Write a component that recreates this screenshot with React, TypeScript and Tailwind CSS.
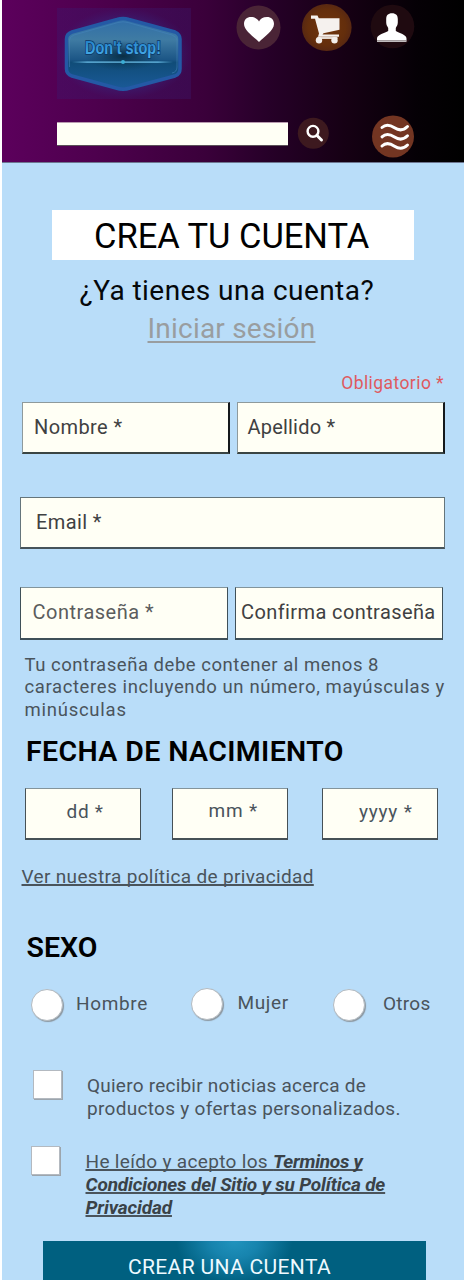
import type { ReactNode } from "react";

function Logo() {
  return (
    <svg className="mt-2 h-[91px] w-[134px] shrink-0" viewBox="57 8 134 91" role="img" aria-label="Don't stop!">
      <defs>
        <radialGradient id="glow">
          <stop offset="0.5" stopColor="#2d3c96" stopOpacity="0.75" />
          <stop offset="1" stopColor="#3a1a70" stopOpacity="0.35" />
        </radialGradient>
        <linearGradient id="badge" x1="0" y1="0" x2="0" y2="1">
          <stop offset="0" stopColor="#2f6da8" />
          <stop offset="0.3" stopColor="#3f7ba3" />
          <stop offset="0.58" stopColor="#1c5686" />
          <stop offset="0.62" stopColor="#104c78" />
          <stop offset="1" stopColor="#1a5a98" />
        </linearGradient>
        <radialGradient id="shade">
          <stop offset="0" stopColor="#06283c" stopOpacity="0.9" />
          <stop offset="1" stopColor="#0a3b58" stopOpacity="0" />
        </radialGradient>
        <linearGradient id="letters" x1="0" y1="0" x2="0" y2="1">
          <stop offset="0" stopColor="#1f7cc4" />
          <stop offset="1" stopColor="#4db4ee" />
        </linearGradient>
        <linearGradient id="rule">
          <stop offset="0" stopColor="#6fc4ee" stopOpacity="0" />
          <stop offset="0.15" stopColor="#6fc4ee" />
          <stop offset="0.85" stopColor="#6fc4ee" />
          <stop offset="1" stopColor="#6fc4ee" stopOpacity="0" />
        </linearGradient>
      </defs>
      <rect x="57" y="8" width="134" height="91" fill="url(#glow)" />
      <path d="M117 19.5Q123 17.5 129 19.5L175 32Q180 34 180 39V69Q180 74 175 76L130 88Q123 90.500 116 88L72 76Q66.500 74 66.500 69V39Q66.500 34 72 32Z" fill="url(#badge)" stroke="#2459a5" strokeWidth="3.500" />
      <path d="M118 22.500Q123 21 128 22.500L172 35Q177 37 177 40V67Q177 72 172 73" fill="none" stroke="#4583bb" strokeOpacity="0.7" strokeWidth="0.800" />
      <path d="M118 22.500L74 35Q69.500 37 69.500 40V67" fill="none" stroke="#4583bb" strokeOpacity="0.7" strokeWidth="0.800" />
      <ellipse cx="123" cy="56" rx="38" ry="15" fill="url(#shade)" />
      <rect x="72" y="61.500" width="101" height="1.200" fill="url(#rule)" />
      <circle cx="123" cy="62" r="2" fill="#3badd4" />
      <text x="85" y="54.300" textLength="76" lengthAdjust="spacingAndGlyphs" className="font-['Liberation_Sans'] text-[18px] font-bold" fill="url(#letters)" stroke="#0b3664" strokeWidth="1.600" paintOrder="stroke">
        Don't stop!
      </text>
    </svg>
  );
}

function HeartIcon() {
  return (
    <svg className="mt-[5px] ml-[45px] size-[45px] shrink-0" viewBox="236 5 45 45">
      <circle cx="258.500" cy="27.500" r="22" fill="#4a2436" />
      <path d="M259 42C254 37 244 30.500 244 24C244 19.500 247 17 251 17C255 17 258 19 259 21.500C260 19 263 17 267 17C271 17 274 19.500 274 24C274 30.500 264 37 259 42Z" fill="#fff" />
    </svg>
  );
}

function CartIcon() {
  return (
    <svg className="mt-[4px] ml-[21px] h-[48px] w-[50px] shrink-0" viewBox="302 4 50 48">
      <defs>
        <radialGradient id="cartDisc">
          <stop offset="0" stopColor="#70350c" />
          <stop offset="0.75" stopColor="#642e0c" />
          <stop offset="1" stopColor="#582812" />
        </radialGradient>
      </defs>
      <ellipse cx="326.800" cy="27.500" rx="24.800" ry="23.500" fill="url(#cartDisc)" />
      <path d="M311 15.500H317.500L318.800 18.200H339.500V29.800L323.500 33.300L322.500 34.500H339V36.800H318L319 33.500L315 18.800H311Z" fill="#f5f1ee" />
      <path d="M317.500 36.800H337.500V39H317.500Z" fill="#e3d8cf" />
      <circle cx="319" cy="40.300" r="3.200" fill="#f3efec" />
      <circle cx="334.500" cy="40.300" r="3.200" fill="#f3efec" />
    </svg>
  );
}

function UserIcon() {
  return (
    <svg className="mt-[4px] ml-[18px] size-[45px] shrink-0" viewBox="370 4 45 45">
      <circle cx="392.500" cy="26.500" r="21.800" fill="#1f0a10" />
      <path d="M392 13.300C396 13.300 397.800 15.500 397.800 19V22.500C397.800 25 396.500 26.500 395.800 28V31C399 33 406.500 34.500 406.500 38.500V41.800H377V38.500C377 34.500 385 33 388.200 31V28C387.500 26.500 386.200 25 386.200 22.500V19C386.200 15.500 388 13.300 392 13.300Z" fill="#fff" />
      <path d="M377 40.600H406.500" stroke="#54474b" strokeWidth="0.600" />
    </svg>
  );
}

function SearchIcon() {
  return (
    <svg className="mt-[2px] ml-[9px] size-[32px] shrink-0" viewBox="297 117 32 32">
      <circle cx="313.300" cy="133.300" r="15.500" fill="#3d191f" />
      <circle cx="313" cy="131.300" r="5.400" fill="none" stroke="#fff" strokeWidth="2.400" />
      <path d="M317 135.500L321.500 140" stroke="#fff" strokeWidth="3" strokeLinecap="round" />
    </svg>
  );
}

function WavesIcon() {
  return (
    <svg className="ml-[43px] h-[43px] w-[42px] shrink-0" viewBox="372 115 42 43">
      <circle cx="393" cy="136.500" r="21" fill="#733522" />
      <g fill="none" stroke="#fff" strokeWidth="3" strokeLinecap="round">
        <path d="M382 127.500C386 123.800 390 124.800 394.500 127.800S403.500 130.500 407.500 126.500" />
        <path d="M382 136.800C386 133 390 134 394.500 137S403.500 139.800 407.500 135.800" />
        <path d="M382 146C386 142.200 390 143.200 394.500 146.200S403.500 149 407.500 145" />
      </g>
    </svg>
  );
}

function Field({ className, children }: { className: string; children: ReactNode }) {
  return (
    <div className={"shrink-0 whitespace-nowrap border bg-[#fffff5] " + className}>{children}</div>
  );
}

function Radio({ className }: { className: string }) {
  return (
    <span className={"size-[32px] shrink-0 rounded-full border border-[#b4bbc1] bg-white shadow-[1px_1px_1px_#8b969f] " + className} />
  );
}

function Checkbox() {
  return <span className="size-[29px] shrink-0 border border-[#b3b9c0] bg-white shadow-[1px_1px_0px_#9ca5ad]" />;
}

export default function App() {
  return (
    <div className="h-[1280px] w-[464px] overflow-hidden bg-white pl-[2px] font-['Roboto',sans-serif]">
      <div className="h-full w-[462px] bg-[#b9ddf9]">
        <header className="h-[163px] border-b border-[#6d7690] bg-[linear-gradient(90deg,#5c005c_0%,#4e004e_20%,#3a003a_44%,#260028_58%,#160014_74%,#050005_90%,#000_100%)] pl-[55px]">
          <div className="flex h-[119px] items-start">
            <Logo />
            <HeartIcon />
            <CartIcon />
            <UserIcon />
          </div>
          <div className="-mt-[4px] flex items-start">
            <div className="mt-[7px] h-[24px] w-[231px] shrink-0 border-y border-t-[#b99bb0] border-b-[#5b5058] bg-[#fffff5]" />
            <div className="flex">
              <SearchIcon />
              <WavesIcon />
            </div>
          </div>
        </header>

        <main className="text-[#4a545c]">
          <h1 className="mt-[47px] ml-[50px] h-[50px] w-[362px] bg-white pl-[42px] text-[34.500px] leading-[52px] tracking-[-0.030px] whitespace-nowrap text-black">
            CREA TU CUENTA
          </h1>
          <p className="mt-[12px] h-[38px] pl-[77.500px] text-[28px] leading-[38px] tracking-[0.440px] whitespace-nowrap text-[#05080a]">¿Ya tienes una cuenta?</p>
          <p className="h-[38px] pl-[145.500px] text-[28px] leading-[37px] tracking-[0.210px] text-[#999da0]">
            <a className="underline decoration-[1.500px] underline-offset-[3px]">Iniciar sesión</a>
          </p>
          <p className="mt-[23px] h-[24px] pr-[20px] text-right text-[17.500px] leading-[25px] tracking-[0.420px] text-[#df5a60]">Obligatorio *</p>

          <div className="mt-[7px] flex pl-[20px] text-[20px] leading-[48px] text-[#3f4142]">
            <Field className="h-[52px] w-[208px] border-r-2 border-b-2 border-[#8e9a9c] border-r-[#15191c] border-b-[#3a4544] pl-[11px] tracking-[0.400px]">Nombre *</Field>
            <Field className="ml-[7px] h-[52px] w-[208px] border-r-2 border-b-2 border-[#8e9a9c] border-r-[#15191c] border-b-[#3a4544] pl-[9.500px] tracking-[0.200px]">Apellido *</Field>
          </div>
          <Field className="mt-[43px] ml-[18px] h-[52px] w-[425px] border-b-2 border-[#65757b] border-b-[#47545a] pl-[15px] text-[20px] leading-[48px] tracking-[0.400px] text-[#3f4142]">Email *</Field>
          <div className="mt-[38px] flex pl-[18px] text-[20px] leading-[49px]">
            <Field className="h-[53px] w-[208px] border-b-2 border-[#3f5058] border-t-[#82949b] pl-[11.500px] tracking-[0.500px] text-[#5b5d5d]">Contraseña *</Field>
            <Field className="ml-[7px] h-[53px] w-[208px] border-b-2 border-[#3f5058] border-t-[#82949b] pl-[5px] tracking-[0.400px] text-[#3f4142]">Confirma contraseña</Field>
          </div>
          <p className="mt-[13.600px] h-[69px] pl-[22.500px] text-[18.500px] leading-[22.750px] whitespace-nowrap">
            <span className="block tracking-[0.530px]">Tu contraseña debe contener al menos 8</span>
            <span className="block tracking-[0.610px]">caracteres incluyendo un número, mayúsculas y</span>
            <span className="block tracking-[0.750px]">minúsculas</span>
          </p>
          <h2 className="mt-[12.400px] h-[34px] pl-[24px] text-[28.500px] leading-[34px] font-semibold tracking-[0.390px] whitespace-nowrap text-black">FECHA DE NACIMIENTO</h2>
          <div className="mt-[19px] flex pl-[23px] text-[19px] leading-[45px]">
            <Field className="h-[52px] w-[116px] border-b-2 border-[#465156] border-t-[#84949b] pl-[40.500px] tracking-[0.700px]">dd *</Field>
            <Field className="ml-[31px] h-[52px] w-[116px] border-b-2 border-[#465156] border-t-[#84949b] pl-[35.500px] leading-[43px] tracking-[0.800px]">mm *</Field>
            <Field className="ml-[34px] h-[52px] w-[116px] border-b-2 border-[#465156] border-t-[#84949b] pl-[36px] tracking-[0.800px]">yyyy *</Field>
          </div>
          <p className="mt-[25px] h-[24px] pl-[19.500px] text-[19px] leading-[24px] tracking-[0.340px] whitespace-nowrap">
            <a className="underline decoration-[1.500px] underline-offset-[1px] [text-decoration-skip-ink:none]">Ver nuestra política de privacidad</a>
          </p>
          <h2 className="mt-[41px] h-[34px] pl-[24.500px] text-[28.500px] leading-[35px] font-semibold text-black">SEXO</h2>
          <div className="mt-[24px] flex h-[36px] items-start pl-[29px] text-[19px] leading-[24px]">
            <Radio className="mt-[1px]" />
            <span className="mt-[4px] ml-[13px] w-[75px] tracking-[0.650px]">Hombre</span>
            <Radio className="ml-[39.500px]" />
            <span className="mt-[3px] ml-[15px] w-[54px] tracking-[0.650px]">Mujer</span>
            <Radio className="mt-[1px] ml-[41.500px]" />
            <span className="mt-[4px] ml-[18px] tracking-[0.250px]">Otros</span>
          </div>

          <div className="mt-[46px] flex h-[76px] items-start pl-[31px] text-[19px] leading-[23px] whitespace-nowrap">
            <Checkbox />
            <p className="mt-[4px] ml-[25px]">
              <span className="block tracking-[0.230px]">Quiero recibir noticias acerca de</span>
              <span className="block tracking-[0.300px]">productos y ofertas personalizados.</span>
            </p>
          </div>
          <div className="flex h-[95px] items-start pl-[29px] text-[19px] leading-[22.800px] whitespace-nowrap">
            <Checkbox />
            <p className="mt-[5.500px] ml-[25.500px] underline decoration-[1.500px] underline-offset-[1px] [text-decoration-skip-ink:none]">
              <span className="tracking-[0.330px]">He leído y acepto los </span>
              <b className="font-bold text-[#3a4248] italic">
                <span className="tracking-[-0.280px]">Terminos y</span>
                <br />
                <span className="tracking-[-0.160px]">Condiciones del Sitio y su Política de</span>
                <br />
                <span className="tracking-[-0.120px]">Privacidad</span>
              </b>
            </p>
          </div>
          <button className="ml-[41px] block h-[60px] w-[383px] bg-[radial-gradient(ellipse_58px_42px_at_50%_0,#2093bd_0%,#1784ae_40%,#006080_100%)] pl-[85px] text-left align-top text-[21px] tracking-[0.350px] whitespace-nowrap text-[#eefaff]">
            <span className="block h-[60px] leading-[52px]">CREAR UNA CUENTA</span>
          </button>
        </main>
      </div>
    </div>
  );
}
